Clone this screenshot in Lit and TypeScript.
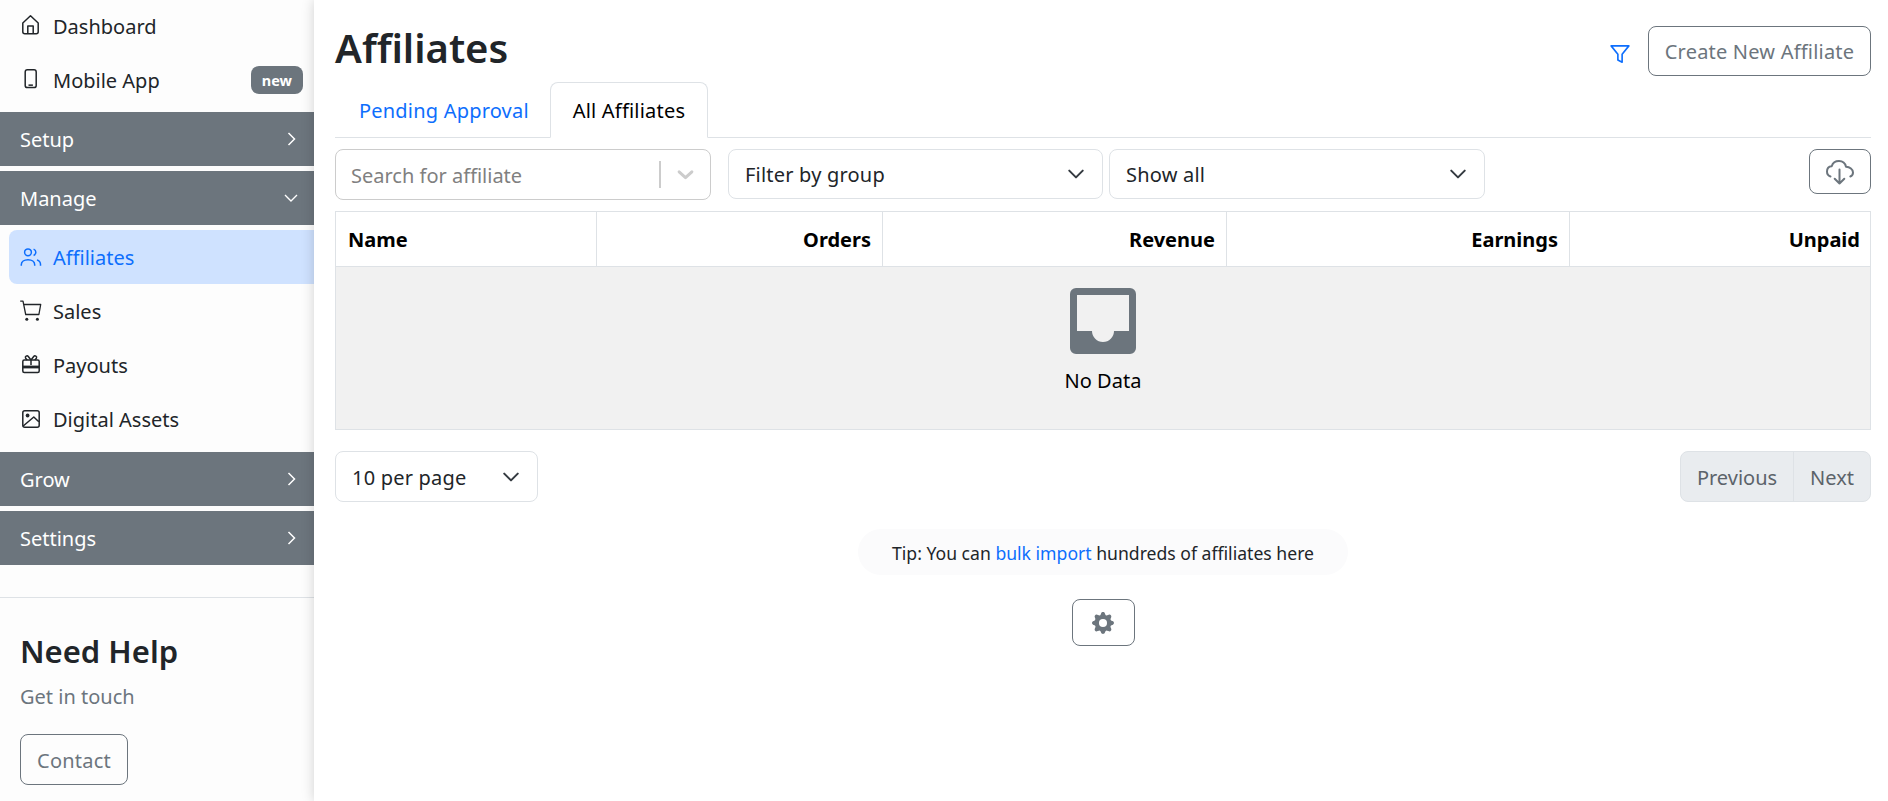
import { LitElement, css, html, svg } from 'lit';
import { customElement } from 'lit/decorators.js';

const icon = (body: unknown, size = 20, vb = '0 0 16 16') => html`
    <svg class="icon" width=${size} height=${size} viewBox=${vb} fill="currentColor">${body}</svg>
`;

// sidebar icons are drawn on a 20 unit box, stroked to look like the originals
const line = (body: unknown) => icon(svg`<g fill="none" stroke="currentColor" stroke-width="1.5" stroke-linejoin="round">${body}</g>`, 20, '0 0 20 20');

const icons = {
    house: line(svg`<path d="M1.800 7 9.500-.2 17.200 7v8.800a2 2 0 0 1-2 2H3.800a2 2 0 0 1-2-2zM6.800 17.800V10h5.400v7.800"/>`),
    phone: html`<svg class="icon" width="20" height="20" viewBox="0 0 20 20" fill="currentColor">
        <rect x="4.200" y="-.2" width="11" height="17.800" rx="2.200" fill="none" stroke="currentColor" stroke-width="1.500"/>
        <rect x="7.500" y="14.400" width="4.400" height="1.500"/>
    </svg>`,
    people: line(svg`<circle cx="7" cy="5.300" r="3.400"/><path d="M.3 18.700v-1c0-3 2.800-5 6.700-5s6.700 2 6.700 5v1M12.600 2.100a3.400 3.400 0 0 1 0 6.400M16 12.900c2.200.8 3.500 2.400 3.500 4.400v1.400"/>`),
    cart: html`<svg class="icon" width="20" height="20" viewBox="0 0 20 20" fill="currentColor">
        <path fill="none" stroke="currentColor" stroke-width="1.300" stroke-linejoin="round" d="M-.8.200H2l2.700 13.300h13.200l1.800-10H2.800"/>
        <circle cx="5.800" cy="18.200" r="1.500"/><circle cx="16.400" cy="18.200" r="1.500"/>
    </svg>`,
    gift: html`<svg class="icon" width="20" height="20" viewBox="0 0 20 20" fill="currentColor">
        <g fill="none" stroke="currentColor" stroke-width="1.500" stroke-linejoin="round">
            <rect x="1.800" y="5" width="16.400" height="12.600" rx="1.500"/>
            <path d="M10 5 7.300 1.500a1.600 1.600 0 0 0-2.700 1.700L6.200 5M10 5l2.700-3.500a1.600 1.600 0 0 1 2.700 1.700L13.800 5M10 5v5"/>
        </g>
        <rect x="1.800" y="10.600" width="16.400" height="2.800"/>
    </svg>`,
    image: html`<svg class="icon" width="20" height="20" viewBox="0 0 20 20" fill="currentColor">
        <g fill="none" stroke="currentColor" stroke-width="1.500" stroke-linejoin="round">
            <rect x="1.800" y="1.800" width="16.400" height="16.400" rx="2"/>
            <path d="M2.200 17 12.800 8l5 4.800"/>
        </g>
        <circle cx="6.600" cy="6.500" r="1.900"/>
    </svg>`,
    funnel: icon(svg`<path fill="none" stroke="currentColor" stroke-width="1.300" stroke-linejoin="round" d="M.9 1.500h14.200L9.700 8.200v6.400L6.300 12.800V8.200z"/>`),
    cloud: html`<svg class="icon" width="28" height="28" viewBox="0 0 28 28" fill="none" stroke="currentColor" stroke-width="2" stroke-linecap="round" stroke-linejoin="round">
        <path d="M4.500 18.500C2.300 17.800 1 16 1 13.500c0-3 2-5.100 4.700-5.300C6.700 5 9.500 3 13 3c3.500 0 6.200 2.200 7 5.800 3.800.2 7 2.500 7 5.700 0 2-1 3.400-2.700 4"/>
        <path d="M13.500 11.500v14M8.700 20.700l4.800 4.800 4.800-4.800"/>
    </svg>`,
    gear: icon(svg`<path d="M9.405 1.050c-.413-1.400-2.397-1.400-2.810 0l-.1.340a1.464 1.464 0 0 1-2.105.872l-.310-.170c-1.283-.698-2.686.705-1.987 1.987l.169.311c.446.820.023 1.841-.872 2.105l-.340.1c-1.400.413-1.400 2.397 0 2.810l.340.1a1.464 1.464 0 0 1 .872 2.105l-.170.310c-.698 1.283.705 2.686 1.987 1.987l.311-.169a1.464 1.464 0 0 1 2.105.872l.1.340c.413 1.400 2.397 1.400 2.810 0l.1-.340a1.464 1.464 0 0 1 2.105-.872l.310.170c1.283.698 2.686-.705 1.987-1.987l-.169-.311a1.464 1.464 0 0 1 .872-2.105l.340-.1c1.400-.413 1.400-2.397 0-2.810l-.340-.1a1.464 1.464 0 0 1-.872-2.105l.170-.310c.698-1.283-.705-2.686-1.987-1.987l-.311.169a1.464 1.464 0 0 1-2.105-.872l-.1-.340zM8 10.930a2.929 2.929 0 1 1 0-5.860 2.929 2.929 0 0 1 0 5.858z"/>`, 22),
    right: icon(svg`<path fill="none" stroke="currentColor" stroke-width="1.500" d="m5.500 2 6 6-6 6"/>`, 16),
    down: icon(svg`<path fill="none" stroke="currentColor" stroke-width="1.400" d="m2 5 6 6 6-6"/>`, 16),
    thick: icon(svg`<path fill="none" stroke="currentColor" stroke-width="2.800" stroke-linecap="round" stroke-linejoin="round" d="m2 5.500 6 5.500 6-5.500"/>`, 17),
    caret: icon(svg`<path fill="none" stroke="#343a40" stroke-width="1.800" stroke-linecap="round" stroke-linejoin="round" d="m2 5 6 6 6-6"/>`, 18),
};

const columns = ['Name', 'Orders', 'Revenue', 'Earnings', 'Unpaid'];

@customElement('app-root')
export class AppRoot extends LitElement {
    static styles = css`
        :host {
            display: flex;
            height: 801px;
            overflow: hidden;
            background: #fff;
            color: #212529;
            font-family: "Noto Sans", "Open Sans", sans-serif;
            font-size: 20px;
            line-height: 30px;
        }

        /* the 2px top padding on rows sits the text a pixel lower, icons stay centred */
        .icon {
            display: block;
            flex: none;
            overflow: visible;
            margin-top: -2px;
        }

        .sidebar {
            width: 314px;
            flex: none;
            background: #fdfdfd;
        }

        .nav {
            margin-top: -1px;
        }

        .item {
            display: flex;
            align-items: center;
            box-sizing: border-box;
            height: 54px;
            gap: 12px;
            padding: 2px 11px 0 21px;
        }

        .item.active {
            margin: 5px 0 0 9px;
            padding-left: 12px;
            background: #cfe2ff;
            color: #0d6efd;
            border-radius: 8px 0 0 8px;
        }

        .item .badge {
            margin: -2px 0 0 auto;
            background: #6c757d;
            color: #fff;
            font-size: 14.500px;
            font-weight: 700;
            line-height: 28px;
            padding: 0 11px;
            border-radius: 8px;
        }

        .group {
            display: flex;
            align-items: center;
            justify-content: space-between;
            box-sizing: border-box;
            height: 54px;
            margin-top: 5px;
            padding: 2px 15px 0 20px;
            background: #6c757d;
            color: #fff;
        }

        .item + .group {
            margin-top: 5px;
        }

        .active ~ .item + .group {
            margin-top: 6px;
        }

        .help {
            margin-top: 32px;
            padding: 32px 20px 0;
            border-top: 1px solid #dee2e6;
        }

        .help h2 {
            margin: 0;
            font-size: 31px;
            font-weight: 600;
            line-height: 42px;
        }

        .help p {
            margin: 10px 0 22px;
            color: #6c757d;
        }

        .btn {
            display: flex;
            align-items: center;
            justify-content: center;
            box-sizing: border-box;
            border: 1px solid #6c757d;
            border-radius: 8px;
            background: transparent;
            color: #6c757d;
            font: inherit;
            letter-spacing: .2px;
            padding: 2px 0 0;
        }

        .contact {
            width: 108px;
            height: 51px;
        }

        .main {
            position: relative;
            flex: 1;
            min-width: 0;
            padding: 0 17px 0 21px;
            background: #fff;
            box-shadow: 0 0 12px rgba(0, 0, 0, .18);
        }

        .head {
            display: flex;
            justify-content: space-between;
            align-items: flex-end;
            height: 82px;
            padding-bottom: 6px;
            box-sizing: border-box;
        }

        .head h1 {
            align-self: flex-start;
            margin: 24px 0 0;
            font-size: 40px;
            font-weight: 600;
            line-height: 48px;
        }

        .actions {
            display: flex;
            align-items: center;
            gap: 18px;
        }

        .filter {
            color: #0d6efd;
            margin-top: 5px;
            padding-top: 2px;
        }

        .create {
            width: 223px;
            height: 50px;
        }

        .tabs {
            display: flex;
            height: 56px;
            box-sizing: border-box;
            border-bottom: 1px solid #dee2e6;
        }

        .tab {
            height: 55px;
            padding: 2px 20px 0 23px;
            box-sizing: border-box;
            display: flex;
            align-items: center;
            border: 1px solid transparent;
            border-radius: 8px 8px 0 0;
            color: #0d6efd;
            letter-spacing: .2px;
        }

        .tab.active {
            color: #000;
            border-color: #dee2e6;
            border-bottom-color: #fff;
            height: 56px;
            padding: 2px 22px 0;
            background: #fff;
        }

        .toolbar {
            display: flex;
            align-items: flex-start;
            margin-top: 11px;
        }

        .field {
            display: flex;
            align-items: center;
            justify-content: space-between;
            box-sizing: border-box;
            height: 50px;
            border: 1px solid #dee2e6;
            border-radius: 8px;
            padding: 2px 17px 0 16px;
            letter-spacing: .2px;
        }

        .search {
            width: 376px;
            height: 51px;
            padding: 2px 16px 0 15px;
            margin-right: 17px;
            border-color: #ccc;
            color: #808080;
            letter-spacing: 0;
        }

        .search .sep {
            width: 2px;
            height: 27px;
            background: #ccc;
            margin: -2px 16px 0 auto;
        }

        .search .icon {
            color: #ccc;
        }

        .group-filter {
            width: 375px;
            margin-right: 6px;
        }

        .show {
            width: 376px;
        }

        .download {
            width: 62px;
            height: 45px;
            margin-left: auto;
        }

        .table {
            margin-top: 11px;
            border: 1px solid #dee2e6;
        }

        .thead {
            display: grid;
            grid-template-columns: 260px 286px 344px 343px 1fr;
            height: 54px;
            border-bottom: 1px solid #dee2e6;
            font-weight: 700;
            color: #000;
        }

        .thead div {
            display: flex;
            align-items: center;
            justify-content: flex-end;
            padding: 2px 11px 0;
            border-left: 1px solid #dee2e6;
        }

        .thead div:first-child {
            justify-content: flex-start;
            padding: 2px 12px 0;
            border-left: 0;
        }

        .thead div:last-child {
            padding-right: 10px;
        }

        .empty {
            display: flex;
            flex-direction: column;
            align-items: center;
            height: 162px;
            box-sizing: border-box;
            padding-top: 21px;
            background: #f1f1f1;
            color: #000;
        }

        .empty svg {
            color: #6c757d;
            margin-bottom: 12px;
        }

        .pager {
            display: flex;
            justify-content: space-between;
            margin-top: 21px;
        }

        .per-page {
            width: 203px;
            height: 51px;
        }

        .pages {
            display: flex;
            height: 51px;
            box-sizing: border-box;
            border: 1px solid #dee2e6;
            border-radius: 8px;
            background: #e9ecef;
            color: #5c636a;
        }

        .pages span {
            display: flex;
            align-items: center;
            padding: 2px 16px 0;
        }

        .pages span + span {
            border-left: 1px solid #dee2e6;
        }

        .foot {
            display: flex;
            flex-direction: column;
            align-items: center;
        }

        .tip {
            margin-top: 27px;
            padding: 2px 34px 0;
            height: 46px;
            box-sizing: border-box;
            display: flex;
            align-items: center;
            background: #fbfbfc;
            border-radius: 23px;
            font-size: 17.600px;
            white-space: pre;
        }

        .tip a {
            color: #0d6efd;
        }

        .gear {
            width: 63px;
            height: 47px;
            margin-top: 24px;
        }
    `;

    private _item(label: string, glyph: unknown, active = false, badge = '') {
        return html`
            <div class="item ${active ? 'active' : ''}">
                ${glyph}<span>${label}</span>
                ${badge ? html`<span class="badge">${badge}</span>` : ''}
            </div>
        `;
    }

    private _group(label: string, open = false) {
        return html`
            <div class="group"><span>${label}</span>${open ? icons.down : icons.right}</div>
        `;
    }

    render() {
        return html`
            <aside class="sidebar">
                <div class="nav">
                    ${this._item('Dashboard', icons.house)}
                    ${this._item('Mobile App', icons.phone, false, 'new')}
                    ${this._group('Setup')}
                    ${this._group('Manage', true)}
                    ${this._item('Affiliates', icons.people, true)}
                    ${this._item('Sales', icons.cart)}
                    ${this._item('Payouts', icons.gift)}
                    ${this._item('Digital Assets', icons.image)}
                    ${this._group('Grow')}
                    ${this._group('Settings')}
                </div>
                <div class="help">
                    <h2>Need Help</h2>
                    <p>Get in touch</p>
                    <button class="btn contact">Contact</button>
                </div>
            </aside>
            <main class="main">
                <div class="head">
                    <h1>Affiliates</h1>
                    <div class="actions">
                        <span class="filter">${icons.funnel}</span>
                        <button class="btn create">Create New Affiliate</button>
                    </div>
                </div>
                <div class="tabs">
                    <div class="tab">Pending Approval</div>
                    <div class="tab active">All Affiliates</div>
                </div>
                <div class="toolbar">
                    <div class="field search">
                        <span>Search for affiliate</span>
                        <span class="sep"></span>
                        ${icons.thick}
                    </div>
                    <div class="field group-filter"><span>Filter by group</span>${icons.caret}</div>
                    <div class="field show"><span>Show all</span>${icons.caret}</div>
                    <button class="btn download">${icons.cloud}</button>
                </div>
                <div class="table">
                    <div class="thead">${columns.map((c) => html`<div>${c}</div>`)}</div>
                    <div class="empty">
                        <svg width="66" height="66" viewBox="0 0 66 66" fill="currentColor">
                            <path fill-rule="evenodd" d="M6 0h54a6 6 0 0 1 6 6v54a6 6 0 0 1-6 6H6a6 6 0 0 1-6-6V6a6 6 0 0 1 6-6zM7 7v36h15a11 11 0 0 0 22 0h15V7z"/>
                        </svg>
                        <span>No Data</span>
                    </div>
                </div>
                <div class="pager">
                    <div class="field per-page"><span>10 per page</span>${icons.caret}</div>
                    <div class="pages"><span>Previous</span><span>Next</span></div>
                </div>
                <div class="foot">
                    <div class="tip">Tip: You can <a>bulk import</a> hundreds of affiliates here</div>
                    <button class="btn gear">${icons.gear}</button>
                </div>
            </main>
        `;
    }
}
